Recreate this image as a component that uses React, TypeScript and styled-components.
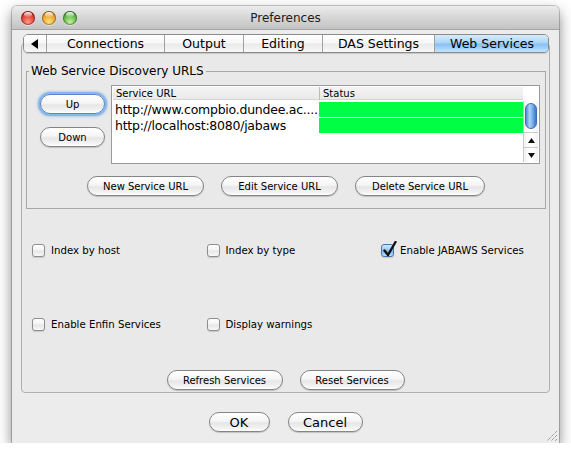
import React from "react";
import styled, { createGlobalStyle } from "styled-components";

const GlobalStyle = createGlobalStyle`
  html, body { margin: 0; padding: 0; background: #ffffff; }
  body { font-family: "DejaVu Sans", "Liberation Sans", sans-serif; color: #000; }
  *, *::before, *::after { box-sizing: border-box; }
`;

const Window = styled.div`
  position: relative;
  margin: 6px 0 0 12px;
  width: 547px;
  height: 437px;
  display: flex;
  flex-direction: column;
  background: #ececec;
  border-radius: 5px 5px 0 0;
  box-shadow: 0 0 0 1px rgba(0, 0, 0, 0.2), 0 6px 14px rgba(0, 0, 0, 0.5);
`;

const TitleBar = styled.div`
  height: 24px;
  flex: none;
  display: grid;
  grid-template-columns: 1fr auto 1fr;
  align-items: center;
  border-radius: 5px 5px 0 0;
  background: linear-gradient(#ececec, #d8d8d8 45%, #c3c3c3);
  border-bottom: 1px solid #a4a4a4;
`;

const Lights = styled.div`
  display: flex;
  gap: 7px;
  padding-left: 9px;
`;

const Light = styled.span<{ $base: string; $dark: string; $hi: string }>`
  position: relative;
  width: 14px;
  height: 14px;
  border-radius: 50%;
  background: radial-gradient(circle at 50% 78%, ${(p) => p.$hi} 0%, ${(p) => p.$base} 55%, ${(p) => p.$dark} 100%);
  box-shadow: inset 0 0 0 1px rgba(0, 0, 0, 0.32), 0 1px 0 rgba(255, 255, 255, 0.5);
  &::after {
    content: "";
    position: absolute;
    left: 3px;
    top: 1px;
    width: 8px;
    height: 5px;
    border-radius: 50%;
    background: linear-gradient(rgba(255, 255, 255, 0.95), rgba(255, 255, 255, 0.15));
  }
`;

const Title = styled.div`
  font-size: 12px;
  color: #1c1c1c;
  line-height: 14px;
`;

const Body = styled.div`
  display: flex;
  flex-direction: column;
  padding: 4px 9px 0 9px;
`;

const TabStrip = styled.div`
  position: relative;
  z-index: 1;
  display: flex;
  height: 19px;
  margin: 0 1px 0 2px;
  border: 1px solid #8b8b8b;
  border-radius: 5px;
  overflow: hidden;
  box-shadow: 0 1px 1px rgba(0, 0, 0, 0.15);
`;

const Tab = styled.div<{ $w: number; $active?: boolean }>`
  width: ${(p) => p.$w}px;
  flex: none;
  display: flex;
  align-items: center;
  justify-content: center;
  font-size: 12.5px;
  line-height: 17px;
  color: #000;
  background: ${(p) =>
    p.$active
      ? "linear-gradient(#d6ecfd, #acd4f7 46%, #86c0f4 54%, #c2e3fd)"
      : "linear-gradient(#ffffff, #f7f7f7 46%, #eaeaea 54%, #f8f8f8)"};
  & + & {
    border-left: 1px solid #a0a0a0;
  }
`;

const Pane = styled.div`
  margin-top: -10px;
  height: 350px;
  display: flex;
  flex-direction: column;
  border: 1px solid #b0b0b0;
  border-radius: 4px;
  background: #e9e9e9;
`;

const Group = styled.fieldset`
  margin: 20px 3px 0 4px;
  padding: 7px 5px 12px 13px;
  border: 1px solid #a8a8a8;
  min-width: 0;
`;

const Legend = styled.legend`
  margin-left: -11px;
  padding: 0 2px;
  font-size: 12px;
  line-height: 14px;
`;

const TopRow = styled.div`
  display: flex;
  gap: 6px;
`;

const SideButtons = styled.div`
  width: 65px;
  flex: none;
  display: flex;
  flex-direction: column;
  gap: 13px;
  padding-top: 9px;
`;

const Button = styled.button<{ $w: number; $fs?: number; $focus?: boolean }>`
  width: ${(p) => p.$w}px;
  height: 20px;
  flex: none;
  padding: 0;
  font-family: "DejaVu Sans", "Liberation Sans", sans-serif;
  font-size: ${(p) => p.$fs ?? 10}px;
  color: #000;
  border-radius: 10px;
  border: 1px solid ${(p) => (p.$focus ? "#5c87c4" : "#858585")};
  background: linear-gradient(#ffffff, #f5f5f5 45%, #e6e6e6 55%, #f3f3f3 85%, #ffffff);
  box-shadow: ${(p) =>
    p.$focus ? "0 0 0 2px #8ab7ea, 0 0 2px 3px rgba(120,170,230,0.45)" : "0 1px 1px rgba(0, 0, 0, 0.18)"};
`;

const Frame = styled.div`
  flex: 1;
  height: 79px;
  border: 1px solid #9a9a9a;
  padding: 1px;
  background: #ffffff;
  display: grid;
  grid-template-columns: 1fr 15px;
  grid-template-rows: 14px 1fr;
`;

const Header = styled.div`
  display: grid;
  grid-template-columns: 206px 1fr;
  background: linear-gradient(#f4f4f4, #e9e9e9);
  border-bottom: 1px solid #ffffff;
  box-shadow: inset 0 -1px 0 #d4d4d4;
`;

const HeadCell = styled.div`
  font-size: 10px;
  line-height: 13px;
  padding-left: 3px;
  & + & {
    border-left: 1px solid #bdbdbd;
  }
`;

const Corner = styled.div`
  background: #ffffff;
`;

const Rows = styled.div`
  display: flex;
  flex-direction: column;
  padding-top: 1px;
`;

const Row = styled.div`
  display: grid;
  grid-template-columns: 206px 1fr;
  height: 16px;
`;

const UrlCell = styled.div`
  font-size: 12.5px;
  letter-spacing: -0.25px;
  line-height: 16px;
  padding-left: 2px;
  white-space: nowrap;
  overflow: hidden;
`;

const StatusCell = styled.div<{ $ok?: boolean }>`
  background: ${(p) => (p.$ok ? "#00ff44" : "transparent")};
  margin-bottom: 1px;
`;

const ScrollBar = styled.div`
  display: flex;
  flex-direction: column;
  border-left: 1px solid #c9c9c9;
  background: linear-gradient(90deg, #f2f2f2, #ffffff 40%, #ffffff 60%, #f2f2f2);
`;

const Track = styled.div`
  flex: 1;
  padding: 2px 1px 0 1px;
`;

const Thumb = styled.div`
  height: 26px;
  border-radius: 7px;
  border: 1px solid #3f6eb3;
  background: linear-gradient(90deg, #4b88d8, #a9d0f6 35%, #8cbdf0 55%, #4d8fdd 85%, #3c78cf);
`;

const Arrow = styled.div`
  height: 15px;
  flex: none;
  display: flex;
  align-items: center;
  justify-content: center;
  border-top: 1px solid #c9c9c9;
`;

const ActionRow = styled.div`
  display: flex;
  justify-content: center;
  gap: 17px;
  margin: 12px -5px 0 -13px;
`;

const CheckGrid = styled.div`
  display: grid;
  grid-template-columns: repeat(3, 174.5px);
  row-gap: 58px;
  margin-top: 33px;
  padding-left: 10px;
`;

const Check = styled.label`
  display: flex;
  align-items: center;
  gap: 6px;
  height: 16px;
  font-size: 10.2px;
`;

const Box = styled.span<{ $on?: boolean }>`
  position: relative;
  width: 13px;
  height: 13px;
  flex: none;
  border-radius: 3px;
  border: 1px solid ${(p) => (p.$on ? "#4c72a8" : "#8e8e8e")};
  background: ${(p) =>
    p.$on
      ? "linear-gradient(#d2e8fc, #97c8f3 48%, #70b1ee 52%, #bcdffc)"
      : "linear-gradient(#ffffff, #f3f3f3 48%, #e5e5e5 52%, #f8f8f8)"};
  box-shadow: 0 1px 1px rgba(0, 0, 0, 0.15);
`;

const Tick = styled.svg`
  position: absolute;
  left: 1px;
  top: -4px;
`;

const PaneButtons = styled.div`
  margin-top: auto;
  margin-bottom: 2px;
  display: flex;
  justify-content: center;
  gap: 17px;
`;

const Footer = styled.div`
  flex: 1;
  display: flex;
  justify-content: center;
  gap: 18px;
  padding-top: 19px;
`;

const Grip = styled.svg`
  position: absolute;
  right: 1px;
  bottom: 1px;
`;

const tabs = [
  { w: 118, label: "Connections" },
  { w: 79, label: "Output" },
  { w: 79, label: "Editing" },
  { w: 112, label: "DAS Settings" },
];

const checks = [
  { label: "Index by host" },
  { label: "Index by type" },
  { label: "Enable JABAWS Services", on: true },
  { label: "Enable Enfin Services" },
  { label: "Display warnings" },
];

export default function App() {
  return (
    <>
      <GlobalStyle />
      <Window>
        <TitleBar>
          <Lights>
            <Light $base="#dc3b32" $dark="#9c1d17" $hi="#ff9a84" />
            <Light $base="#e9a22c" $dark="#a8650f" $hi="#ffe27a" />
            <Light $base="#5eb545" $dark="#2f7a1f" $hi="#c3f29a" />
          </Lights>
          <Title>Preferences</Title>
          <div />
        </TitleBar>
        <Body>
          <TabStrip>
            <Tab $w={22}>
              <svg width="8" height="10" viewBox="0 0 8 10">
                <path d="M7 0 L7 10 L0 5 Z" fill="#000" />
              </svg>
            </Tab>
            {tabs.map((t) => (
              <Tab key={t.label} $w={t.w}>
                {t.label}
              </Tab>
            ))}
            <Tab $w={115} $active>
              Web Services
            </Tab>
          </TabStrip>
          <Pane>
            <Group>
              <Legend>Web Service Discovery URLS</Legend>
              <TopRow>
                <SideButtons>
                  <Button $w={65} $focus>
                    Up
                  </Button>
                  <Button $w={65}>Down</Button>
                </SideButtons>
                <Frame>
                  <Header>
                    <HeadCell>Service URL</HeadCell>
                    <HeadCell>Status</HeadCell>
                  </Header>
                  <Corner />
                  <Rows>
                    <Row>
                      <UrlCell>http://www.compbio.dundee.ac....</UrlCell>
                      <StatusCell $ok />
                    </Row>
                    <Row>
                      <UrlCell>http://localhost:8080/jabaws</UrlCell>
                      <StatusCell $ok />
                    </Row>
                  </Rows>
                  <ScrollBar>
                    <Track>
                      <Thumb />
                    </Track>
                    <Arrow>
                      <svg width="7" height="5" viewBox="0 0 7 5">
                        <path d="M0 5 L7 5 L3.5 0 Z" fill="#111" />
                      </svg>
                    </Arrow>
                    <Arrow>
                      <svg width="7" height="5" viewBox="0 0 7 5">
                        <path d="M0 0 L7 0 L3.5 5 Z" fill="#111" />
                      </svg>
                    </Arrow>
                  </ScrollBar>
                </Frame>
              </TopRow>
              <ActionRow>
                <Button $w={117}>New Service URL</Button>
                <Button $w={117}>Edit Service URL</Button>
                <Button $w={130}>Delete Service URL</Button>
              </ActionRow>
            </Group>
            <CheckGrid>
              {checks.map((c) => (
                <Check key={c.label}>
                  <Box $on={c.on}>
                    {c.on && (
                      <Tick width="14" height="16" viewBox="0 0 14 16">
                        <path d="M1.5 9.5 L5 14 L12.5 1" fill="none" stroke="#111" strokeWidth="2.4" strokeLinecap="round" strokeLinejoin="round" />
                      </Tick>
                    )}
                  </Box>
                  {c.label}
                </Check>
              ))}
            </CheckGrid>
            <PaneButtons>
              <Button $w={116}>Refresh Services</Button>
              <Button $w={105}>Reset Services</Button>
            </PaneButtons>
          </Pane>
        </Body>
        <Footer>
          <Button $w={61} $fs={13}>
            OK
          </Button>
          <Button $w={75} $fs={13}>
            Cancel
          </Button>
        </Footer>
        <Grip width="12" height="12" viewBox="0 0 12 12">
          <path d="M11 1 L1 11 M11 5 L5 11 M11 9 L9 11" stroke="#7a7a7a" strokeWidth="1" strokeDasharray="1 1" />
        </Grip>
      </Window>
    </>
  );
}
